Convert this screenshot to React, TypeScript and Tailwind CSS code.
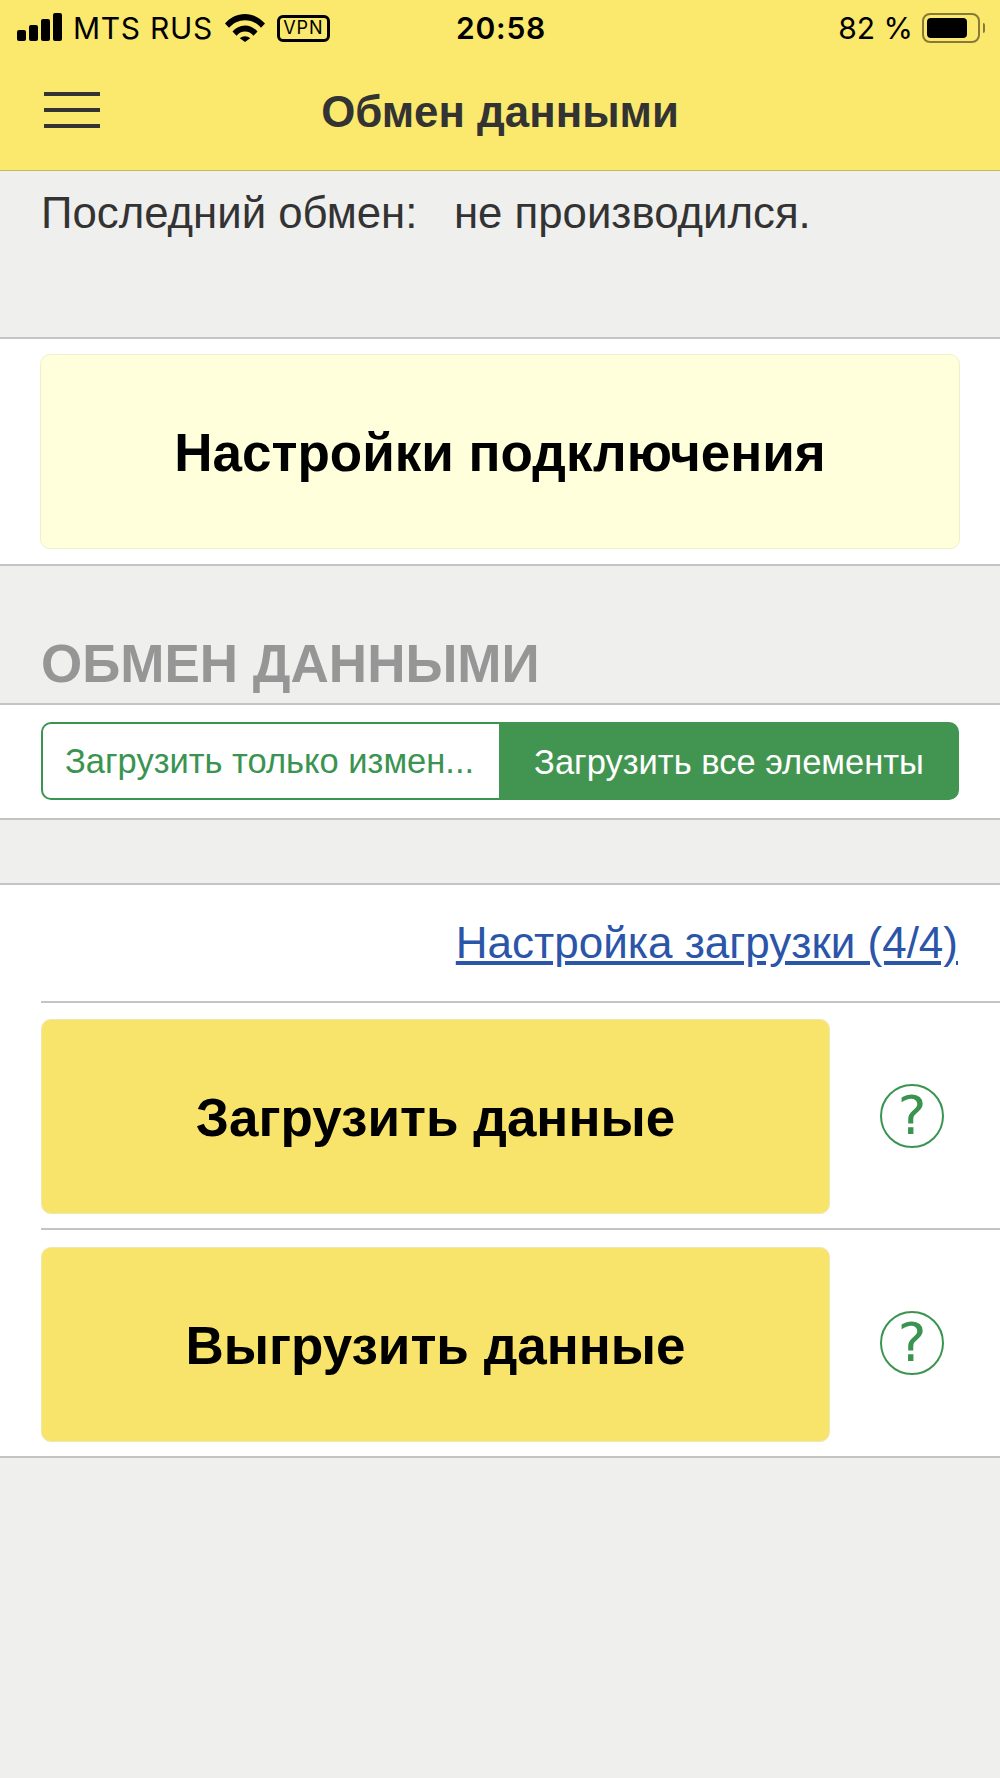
const sans = "font-['Liberation_Sans',Arial,sans-serif]";

function Wifi() {
  return (
    <svg width="40" height="28" viewBox="0 0 40 28" className="fill-black">
      <path d="M0 9.500C5 3.700 12 0 20 0s15 3.700 20 9.500l-4 4.300C31.800 9 26.200 6.200 20 6.200S8.200 9 4 13.800z" />
      <path d="M7.500 17.500C10.700 13.800 15 11.400 20 11.400s9.300 2.400 12.500 6.100l-4 4.200C26.300 19.200 23.300 17.600 20 17.600s-6.300 1.600-8.500 4.100z" />
      <path d="M14.800 24.300c1.400-1.300 3.200-2.100 5.200-2.100s3.800 0.800 5.200 2.100L20 28z" />
    </svg>
  );
}

function StatusBar() {
  return (
    <div className="h-[56px] flex items-center justify-between pl-[17px] pr-[15px] font-['Inter',sans-serif] text-black">
      <div className="flex items-center w-[340px]">
        <div className="flex items-end gap-[3px] h-[28px] mr-[11px] mt-[-3px]">
          <div className="w-[9px] h-[11px] bg-black rounded-[2px]" />
          <div className="w-[9px] h-[16px] bg-black rounded-[2px]" />
          <div className="w-[9px] h-[22px] bg-black rounded-[2px]" />
          <div className="w-[9px] h-[28px] bg-black rounded-[2px]" />
        </div>
        <span className="text-[30px] leading-none tracking-[0.7px] mr-[12px]">MTS RUS</span>
        <Wifi />
        <span className="ml-[12px] w-[53px] h-[27px] border-[3px] border-black rounded-[6px] flex items-center justify-center text-[18px] leading-none tracking-[1px]">
          VPN
        </span>
      </div>
      <div className="text-[30px] leading-none font-semibold tracking-[0.8px]">20:58</div>
      <div className="flex items-center justify-end w-[340px]">
        <span className="text-[30px] leading-none mr-[9px]">82 %</span>
        <div className="w-[58px] h-[30px] border-[2px] border-[#87793a] rounded-[8px] p-[3px]">
          <div className="w-[40px] h-full bg-black rounded-[4px]" />
        </div>
        <div className="w-[2px] h-[10px] bg-[#87793a] rounded-r-[2px] ml-[3px]" />
      </div>
    </div>
  );
}

function Header() {
  return (
    <div className="bg-[#fae96c] border-b border-[#c5b95c] h-[171px]">
      <StatusBar />
      <div className="flex items-center h-[114px] pl-[44px] pb-[3px]">
        <div className="flex flex-col gap-[12px] w-[56px] mt-[-3px]">
          <div className="h-[4px] bg-[#333333]" />
          <div className="h-[4px] bg-[#333333]" />
          <div className="h-[4px] bg-[#333333]" />
        </div>
        <div className={`flex-1 text-center pr-[100px] text-[43.800px] leading-none font-bold text-[#333333] ${sans}`}>
          Обмен данными
        </div>
      </div>
    </div>
  );
}

function QuestionIcon() {
  return (
    <div className="w-[64px] h-[64px] rounded-full border-[2.500px] border-[#3a9450] flex items-center justify-center text-[#3a9450] text-[54px] leading-none font-['DejaVu_Sans',sans-serif]">
      ?
    </div>
  );
}

function ActionRow({ title, height }: { title: string; height: string }) {
  return (
    <div className={`flex items-center pl-[41px] pt-[2px] ${height}`}>
      <div className={`w-[789px] h-[195px] pt-[2px] bg-[#f9e46b] border border-[#efe6b0] rounded-[10px] flex items-center justify-center text-[53px] leading-none font-bold text-black ${sans}`}>
        {title}
      </div>
      <div className="ml-[50px] mt-[-2px]">
        <QuestionIcon />
      </div>
    </div>
  );
}

export default function App() {
  return (
    <div className={`w-[1000px] h-[1778px] bg-[#efefee] overflow-hidden ${sans}`}>
      <Header />

      <div className="h-[168px] pl-[41px] pt-[17px] text-[43.750px] leading-[50px] text-[#333333] border-b-2 border-[#c4c4c4] whitespace-pre">
        Последний обмен:   не производился.
      </div>

      <div className="bg-white h-[227px] px-[40px] flex items-center border-b-2 border-[#c4c4c4]">
        <div className="w-[920px] h-[195px] pt-[1px] bg-[#ffffdc] border border-[#efefcc] rounded-[10px] flex items-center justify-center text-[53px] leading-none font-bold text-black">
          Настройки подключения
        </div>
      </div>

      <div className="h-[139px] flex items-end pl-[41px] pb-[13px] border-b-2 border-[#c4c4c4] text-[53px] leading-none font-bold text-[#969696]">
        ОБМЕН ДАННЫМИ
      </div>

      <div className="bg-white h-[115px] px-[41px] pb-[2px] flex items-center border-b-2 border-[#c4c4c4]">
        <div className="flex w-[919px] h-[78px] text-[34.500px] leading-none">
          <div className="w-[458px] border-[2px] border-r-0 border-[#3a9450] rounded-l-[10px] flex items-center pl-[22px] pt-[2px] text-[#3a9450] bg-white">
            Загрузить только измен...
          </div>
          <div className="flex-1 bg-[#429550] rounded-r-[10px] flex items-center justify-center pt-[3px] text-white">
            Загрузить все элементы
          </div>
        </div>
      </div>

      <div className="h-[65px] border-b-2 border-[#c4c4c4]" />

      <div className="bg-white border-b-2 border-[#c4c4c4]">
        <div className="h-[116px] flex items-center justify-end pr-[42px] text-[44px] leading-none text-[#2a55a8] underline">
          Настройка загрузки (4/4)
        </div>
        <div className="ml-[41px] border-t-2 border-[#c4c4c4]" />
        <ActionRow title="Загрузить данные" height="h-[225px]" />
        <div className="ml-[41px] border-t-2 border-[#c4c4c4]" />
        <ActionRow title="Выгрузить данные" height="h-[226px]" />
      </div>
    </div>
  );
}
